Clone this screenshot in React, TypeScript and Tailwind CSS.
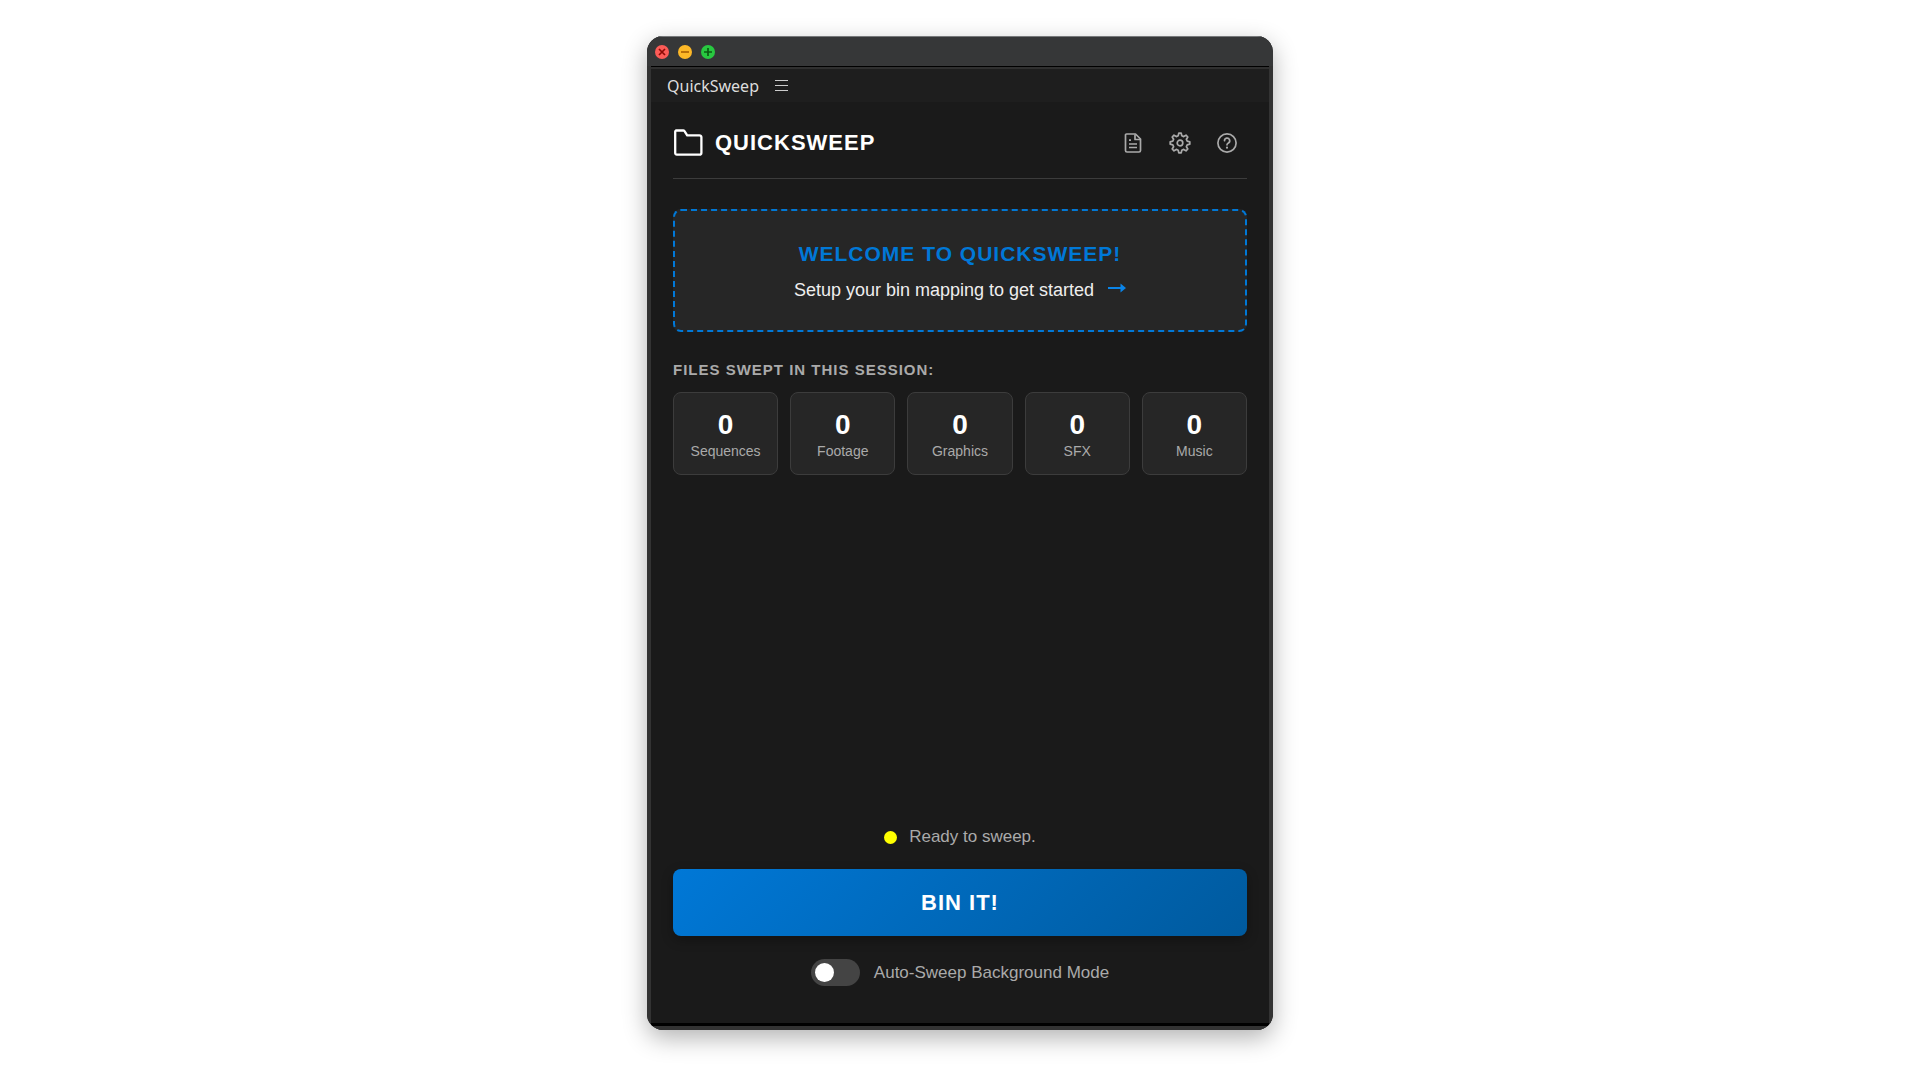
import { useId, useState } from "react";

const stats = [
  { label: "Sequences", count: 0 },
  { label: "Footage", count: 0 },
  { label: "Graphics", count: 0 },
  { label: "SFX", count: 0 },
  { label: "Music", count: 0 }
];

const windowControls = [
  { label: "Close", color: "bg-[#fc5b57]", stroke: "#8c0a05", d: "M4 4l6 6M10 4l-6 6" },
  { label: "Minimize", color: "bg-[#fdb827]", stroke: "#a35a00", d: "M3 7h8" },
  { label: "Zoom", color: "bg-[#28c840]", stroke: "#0a5c12", d: "M7 3v8M3 7h8" }
];

const TitleBar = () => (
  <div className="flex h-[30px] items-center gap-[9px] border-t border-[#77797b] bg-[#363738] pl-2">
    {windowControls.map((control) => (
      <button key={control.label} aria-label={control.label} className={`size-[14px] rounded-full ${control.color}`}>
        <svg viewBox="0 0 14 14" className="size-[14px]" fill="none" stroke={control.stroke} strokeWidth={1.7}>
          <path d={control.d} />
        </svg>
      </button>
    ))}
  </div>
);

const FolderIcon = () => (
  <svg viewBox="0 0 30 30" className="size-[30px]" fill="none" stroke="currentColor" strokeWidth={2.3} strokeLinejoin="round">
    <path d="M3.400 2.500h6.800a1.600 1.600 0 0 1 1.300.6l2.700 4.200h12.200a2 2 0 0 1 2 2v15.400a2 2 0 0 1-2 2H3.800a1.600 1.600 0 0 1-1.600-1.600V4.100a1.400 1.400 0 0 1 1.200-1.600z" />
  </svg>
);

const DocumentIcon = () => (
  <svg viewBox="0 0 20 20" className="size-5" fill="none" stroke="currentColor" strokeWidth={1.7} strokeLinejoin="round">
    <path d="M3.500 1h9l5 5v11.500a1.500 1.500 0 0 1-1.500 1.500H4a1.500 1.500 0 0 1-1.500-1.500V2a1 1 0 0 1 1-1z" />
    <path d="M12 1.500V6.500h5M6 7.200h2M6 11h8M6 14.500h8" />
  </svg>
);

const GearIcon = () => (
  <svg viewBox="0 0 22 22" className="size-[22px]" fill="none" stroke="currentColor" strokeWidth={1.7} strokeLinejoin="round">
    <path d="M9.800 1.200h2.400l.6 2.600 1.900.8 2.300-1.400 1.800 1.800-1.400 2.300.8 1.900 2.600.6v2.400l-2.600.6-.8 1.900 1.400 2.300-1.800 1.800-2.300-1.400-1.900.8-.6 2.600H9.800l-.6-2.600-1.900-.8L5 18.800 3.200 17l1.400-2.300-.8-1.900-2.600-.6V9.800l2.600-.6.8-1.900L3.200 5 5 3.200l2.300 1.400 1.900-.8z" />
    <circle cx="11" cy="11" r="2.800" />
  </svg>
);

const HelpIcon = () => (
  <svg viewBox="0 0 20 20" className="size-5" fill="none" stroke="currentColor" strokeWidth={1.7}>
    <circle cx="10" cy="10" r="9.100" />
    <path d="M7.500 7.700a2.600 2.600 0 1 1 3.900 2.200c-.9.5-1.400.9-1.400 1.900" strokeLinecap="round" />
    <circle cx="10" cy="14.700" r="1.100" fill="currentColor" stroke="none" />
  </svg>
);

const StatCard = ({ label, count }: { label: string; count: number }) => (
  <div className="flex flex-col-reverse items-center rounded-lg border border-[#3c3c3c] bg-[#262626] pt-4 pb-[13px]">
    <dt className="text-sm text-[#aaaaaa]">{label}</dt>
    <dd className="text-[28px] leading-8 font-bold text-white">{count}</dd>
  </div>
);

const App = () => {
  const [autoSweep, setAutoSweep] = useState(false);
  const switchId = useId();

  return (
    <div className="flex min-h-screen justify-center bg-white px-4 pt-9 pb-[50px] font-['Liberation_Sans',Arial,sans-serif]">
      <main className="flex w-full max-w-[626px] flex-col overflow-hidden rounded-[16px] bg-[#1a1a1a] shadow-[0_8px_24px_rgba(0,0,0,0.3)]">
        <TitleBar />

        <div className="flex flex-1 flex-col border-x-4 border-b-4 border-[#333333]">
          <div className="border-t border-black" />
          <div className="flex h-[35px] items-center gap-4 border-t-2 border-[#303030] bg-[#1e1e1e] pl-4">
            <span className="font-['Noto_Sans',sans-serif] text-base text-[#dddddd]">QuickSweep</span>
            <button aria-label="Panel menu" className="text-[#cccccc]">
              <svg viewBox="0 0 13 11" className="h-[11px] w-[13px]" stroke="currentColor" strokeWidth={1}>
                <path d="M0 .5h13M0 5.500h13M0 10.500h13" />
              </svg>
            </button>
          </div>

          <div className="flex flex-1 flex-col px-[22px] pb-[37px]">
            <header className="flex items-center justify-between border-b border-[#3c3c3c] pt-[25px] pb-[19px]">
              <div className="flex items-center gap-3 text-white">
                <FolderIcon />
                <h1 className="text-[22px] leading-8 font-bold tracking-[1px]">QUICKSWEEP</h1>
              </div>
              <nav className="flex items-center gap-[26px] pr-[10px] text-[#aaaaaa]">
                <button aria-label="Log"><DocumentIcon /></button>
                <button aria-label="Settings"><GearIcon /></button>
                <button aria-label="Help"><HelpIcon /></button>
              </nav>
            </header>

            <button className="mt-[30px] flex flex-col items-center rounded-lg border-2 border-dashed border-[#0078d7] bg-[#262626] pt-[27px] pb-7">
              <span className="text-[21px] leading-8 font-bold tracking-[1px] text-[#0078d7]">WELCOME TO QUICKSWEEP!</span>
              <span className="mt-2 flex items-center gap-[14px] text-lg leading-6 text-[#eeeeee]">
                Setup your bin mapping to get started
                <svg viewBox="0 0 18 10" className="mb-1 h-[10px] w-[18px] text-[#0a84e8]" fill="currentColor">
                  <path d="M0 4h12.500V0.500L18 5l-5.500 4.500V6H0z" />
                </svg>
              </span>
            </button>

            <section>
              <h2 className="mt-7 text-[15px] leading-5 font-bold tracking-[1px] text-[#aaaaaa]">FILES SWEPT IN THIS SESSION:</h2>
              <dl className="mt-3 grid grid-cols-5 gap-3">
                {stats.map((stat) => (
                  <StatCard key={stat.label} {...stat} />
                ))}
              </dl>
            </section>

            <footer className="mt-auto flex flex-col items-center text-[17px] leading-6 text-[#aaaaaa]">
              <p role="status" className="flex items-center gap-3">
                <span className="size-[13px] rounded-full bg-[#ffff00]" />
                Ready to sweep.
              </p>
              <button className="mt-5 h-[67px] w-full rounded-lg bg-linear-135 from-[#0078d7] to-[#005a9e] text-[22px] font-bold tracking-[1px] text-white shadow-[0_4px_12px_rgba(0,0,0,0.3)]">
                BIN IT!
              </button>
              <label htmlFor={switchId} className="mt-[23px] flex cursor-pointer items-center gap-[14px]">
                <input
                  id={switchId}
                  type="checkbox"
                  role="switch"
                  checked={autoSweep}
                  onChange={(e) => setAutoSweep(e.target.checked)}
                  className="h-[27px] w-[49px] appearance-none rounded-full bg-[#444444] p-1 before:block before:size-[19px] before:rounded-full before:bg-white before:content-[''] checked:bg-[#0078d7] checked:before:ml-auto"
                />
                Auto-Sweep Background Mode
              </label>
            </footer>
          </div>
          <div className="border-t-[3px] border-black" />
        </div>
      </main>
    </div>
  );
};

export default App;
